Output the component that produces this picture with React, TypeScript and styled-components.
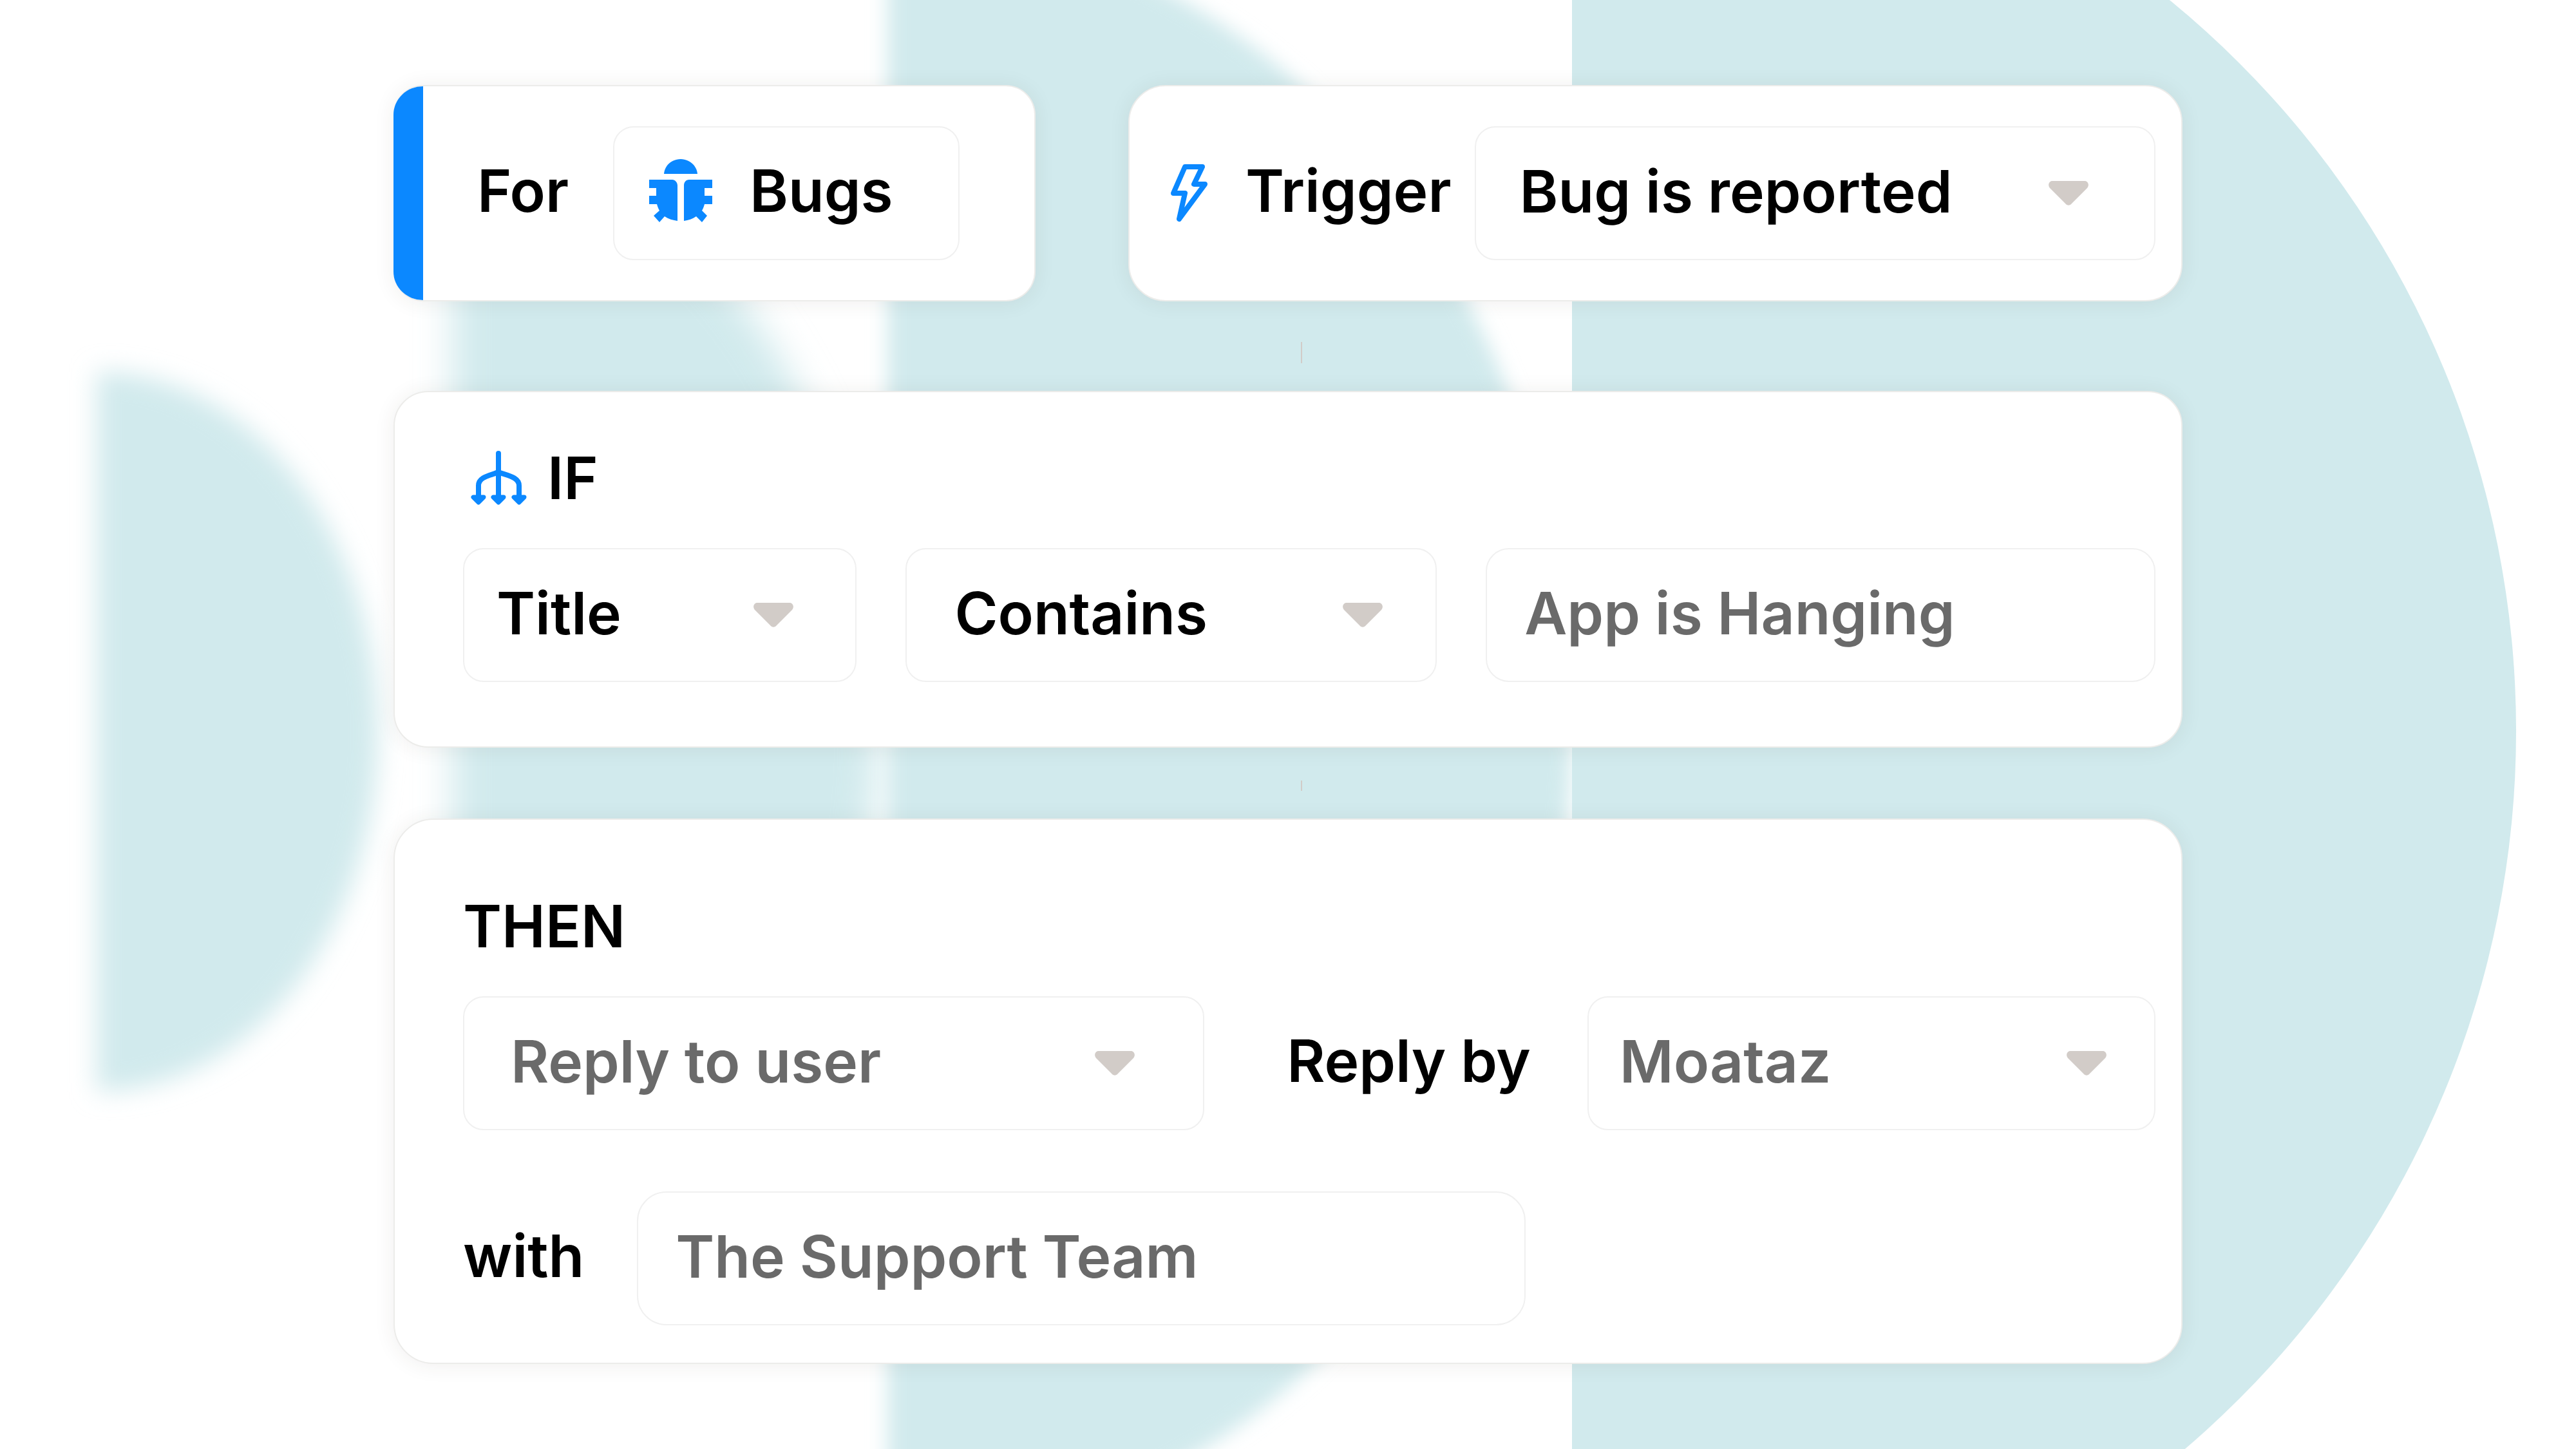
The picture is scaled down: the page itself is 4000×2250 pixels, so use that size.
import React from 'react';
import styled, { createGlobalStyle } from 'styled-components';

const BLUE = '#0b88ff';
const INK = '#000000';
const MUTED = '#6a6a6a';
const TINT = '#d1eaed';
const CARET = '#d2ccc8';
const LINE = '#f0f0f0';

const GlobalStyle = createGlobalStyle`
  *, *::before, *::after { box-sizing: border-box; }
  body {
    margin: 0;
    background: #ffffff;
    color: ${INK};
    font-family: Inter, 'Liberation Sans', Arial, sans-serif;
    font-size: 91px;
    font-weight: 600;
    line-height: 110px;
  }
`;

const Page = styled.main`
  position: relative;
  display: flow-root;
  min-height: 100vh;
  overflow: hidden;
`;

const Backdrop = styled.svg`
  position: absolute;
  inset: 0;
  width: 100%;
  height: 100%;
`;

const Board = styled.form`
  position: relative;
  display: flex;
  flex-direction: column;
  padding: 132px 611px;
`;

const TopRow = styled.div`
  display: grid;
  grid-template-columns: 997fr 1637fr;
  gap: 144px;
`;

const Card = styled.section<{ $radius: number }>`
  display: flex;
  overflow: hidden;
  background: #ffffff;
  border: 2px solid #ececea;
  border-radius: ${(p) => p.$radius}px;
  box-shadow: 0 2px 32px rgba(60, 50, 40, 0.08);
`;

const ForCard = styled(Card)`
  align-items: center;
  border-left: 0;
`;

const Accent = styled.span`
  align-self: stretch;
  width: 46px;
  background: ${BLUE};
`;

const ForBody = styled.div`
  display: flex;
  flex: 1;
  align-items: center;
  justify-content: space-between;
  padding: 62px 116px 62px 84px;
`;

const TriggerCard = styled(Card)`
  align-items: center;
  padding: 62px 40px 62px 64px;
`;

const RuleCard = styled(Card)<{ $top: number; $bottom: number }>`
  flex-direction: column;
  padding: ${(p) => p.$top}px 40px ${(p) => p.$bottom}px 106px;
`;

const Heading = styled.h2`
  display: flex;
  align-items: center;
  gap: 32px;
  margin: 0 0 54px;
  font: inherit;

  > svg { margin-left: 12px; }
`;

const ConditionRow = styled.div`
  display: grid;
  grid-template-columns: 611fr 824fr 1039fr;
  gap: 76px;
`;

const ActionRow = styled.div`
  display: grid;
  grid-template-columns: 1151fr auto 882fr;
  align-items: center;
`;

const TeamRow = styled.div`
  display: flex;
  align-items: center;
  margin-top: 95px;
`;

const Label = styled.label<{ $before?: number; $after?: number }>`
  padding: 0 ${(p) => p.$after ?? 0}px 8px ${(p) => p.$before ?? 0}px;
  white-space: nowrap;
`;

const control = `
  width: 100%;
  min-width: 0;
  height: 208px;
  margin: 0;
  background: #ffffff;
  border: 2px solid ${LINE};
  font: inherit;
  outline: none;
`;

const Chip = styled.button`
  ${control}
  display: flex;
  align-items: center;
  gap: 58px;
  width: 538px;
  padding: 0 54px 8px;
  border-radius: 32px;
  color: ${INK};
`;

const SelectBox = styled.div<{ $caret: number }>`
  display: grid;
  flex: 1;
  align-items: center;

  > * { grid-area: 1 / 1; }
  > svg {
    justify-self: end;
    margin-right: ${(p) => p.$caret}px;
    pointer-events: none;
  }
`;

const Select = styled.select<{ $inset: number; $muted?: boolean }>`
  ${control}
  appearance: none;
  padding: 0 0 6px ${(p) => p.$inset}px;
  border-radius: 32px;
  color: ${(p) => (p.$muted ? MUTED : INK)};
`;

const TextInput = styled.input<{ $radius: number }>`
  ${control}
  padding: 0 58px 6px;
  border-radius: ${(p) => p.$radius}px;
  color: ${MUTED};
`;

const TeamInput = styled(TextInput)`
  width: 1380px;
`;

const Connector = styled.div<{ $gap: number; $length: number; $drop: number }>`
  display: flex;
  align-items: center;
  justify-content: center;
  height: ${(p) => p.$gap}px;
  padding: ${(p) => p.$drop}px 0 0 42px;

  &::before {
    content: '';
    width: 2px;
    height: ${(p) => p.$length}px;
    background: ${CARET};
  }
`;

function Caret() {
  return (
    <svg width="62" height="38" viewBox="0 0 62 38" aria-hidden="true">
      <path
        fill={CARET}
        d="M6 0H56C61 0 64 6 60 11L36 35C33 38.500 29 38.500 26 35L2 11C-2 6 1 0 6 0Z"
      />
    </svg>
  );
}

function BugIcon() {
  return (
    <svg width="98" height="98" viewBox="0 0 98 98" fill={BLUE} aria-hidden="true">
      <path d="M23 23C24 10 35 0 49 0C62 0 74 10 75 23Z" />
      <path d="M0 32H36C40 32 44 36 44 41V96C37 95 30 93 24 89L16 98L7 88L16 80C14 77 13 73 12 70H0V57H11V45H0Z" />
      <path d="M98 32H62C57 32 54 36 54 41V96C61 95 67 93 73 89L82 98L90 88L82 80C84 77 85 73 86 70H98V57H86V45H98Z" />
    </svg>
  );
}

function BoltIcon() {
  return (
    <svg width="58" height="90" viewBox="0 0 58 90" fill="none" aria-hidden="true">
      <path
        d="M22 4H49L36 31H53L13 85L22 45H4Z"
        stroke={BLUE}
        strokeWidth="8"
        strokeLinecap="round"
        strokeLinejoin="round"
      />
    </svg>
  );
}

function BranchIcon() {
  return (
    <svg width="87" height="84" viewBox="0 0 87 84" fill="none" aria-hidden="true">
      <g stroke={BLUE} strokeWidth="8" strokeLinecap="round">
        <path d="M43 4V72" />
        <path d="M43 33C32 38 12 40 12 54V72" />
        <path d="M43 33C54 38 75 40 75 54V72" />
      </g>
      <g fill={BLUE} stroke={BLUE} strokeWidth="7" strokeLinejoin="round">
        <path d="M4 72H20L12 80Z" />
        <path d="M35 72H51L43 80Z" />
        <path d="M67 72H83L75 80Z" />
      </g>
    </svg>
  );
}

function Shapes() {
  return (
    <Backdrop viewBox="0 0 4000 2250" preserveAspectRatio="xMidYMid slice" aria-hidden="true">
      <defs>
        <filter id="soft-1" x="-20%" y="-20%" width="140%" height="140%">
          <feGaussianBlur stdDeviation="19" />
        </filter>
        <filter id="soft-2" x="-20%" y="-20%" width="140%" height="140%">
          <feGaussianBlur stdDeviation="28" />
        </filter>
        <filter id="soft-3" x="-20%" y="-20%" width="140%" height="140%">
          <feGaussianBlur stdDeviation="15" />
        </filter>
      </defs>
      <g fill={TINT}>
        <path d="M150 577A437 559 0 0 1 150 1695Z" filter="url(#soft-1)" />
        <path d="M702 225A661 910 0 0 1 702 2045Z" filter="url(#soft-2)" />
        <path d="M1378 -123A1062 1258 0 0 1 1378 2393Z" filter="url(#soft-3)" />
        <path d="M2441 -331A1466 1466 0 0 1 2441 2601Z" />
      </g>
    </Backdrop>
  );
}

type DropdownProps = {
  id: string;
  value: string;
  inset: number;
  caret: number;
  muted?: boolean;
  label?: string;
};

function Dropdown({ id, value, inset, caret, muted, label }: DropdownProps) {
  return (
    <SelectBox $caret={caret}>
      <Select id={id} $inset={inset} $muted={muted} defaultValue={value} aria-label={label}>
        <option>{value}</option>
      </Select>
      <Caret />
    </SelectBox>
  );
}

export default function App() {
  return (
    <Page>
      <GlobalStyle />
      <Shapes />
      <Board>
        <TopRow>
          <ForCard $radius={46}>
            <Accent />
            <ForBody>
              <Label htmlFor="subject">For</Label>
              <Chip id="subject" type="button">
                <BugIcon />
                Bugs
              </Chip>
            </ForBody>
          </ForCard>
          <TriggerCard $radius={58}>
            <BoltIcon />
            <Label htmlFor="trigger" $before={58} $after={36}>Trigger</Label>
            <Dropdown id="trigger" value="Bug is reported" inset={68} caret={104} />
          </TriggerCard>
        </TopRow>

        <Connector $gap={139} $length={33} $drop={20} />

        <RuleCard $radius={54} $top={78} $bottom={100}>
          <Heading>
            <BranchIcon />
            IF
          </Heading>
          <ConditionRow>
            <Dropdown id="field" value="Title" inset={50} caret={98} label="Field" />
            <Dropdown id="operator" value="Contains" inset={74} caret={84} label="Operator" />
            <TextInput $radius={36} aria-label="Value" defaultValue="App is Hanging" />
          </ConditionRow>
        </RuleCard>

        <Connector $gap={110} $length={16} $drop={8} />

        <RuleCard $radius={62} $top={110} $bottom={58}>
          <Heading>THEN</Heading>
          <ActionRow>
            <Dropdown id="action" value="Reply to user" inset={72} caret={108} muted label="Action" />
            <Label htmlFor="assignee" $before={128} $after={88}>Reply by</Label>
            <Dropdown id="assignee" value="Moataz" inset={48} caret={76} muted />
          </ActionRow>
          <TeamRow>
            <Label htmlFor="team" $after={82}>with</Label>
            <TeamInput id="team" $radius={46} defaultValue="The Support Team" />
          </TeamRow>
        </RuleCard>
      </Board>
    </Page>
  );
}
